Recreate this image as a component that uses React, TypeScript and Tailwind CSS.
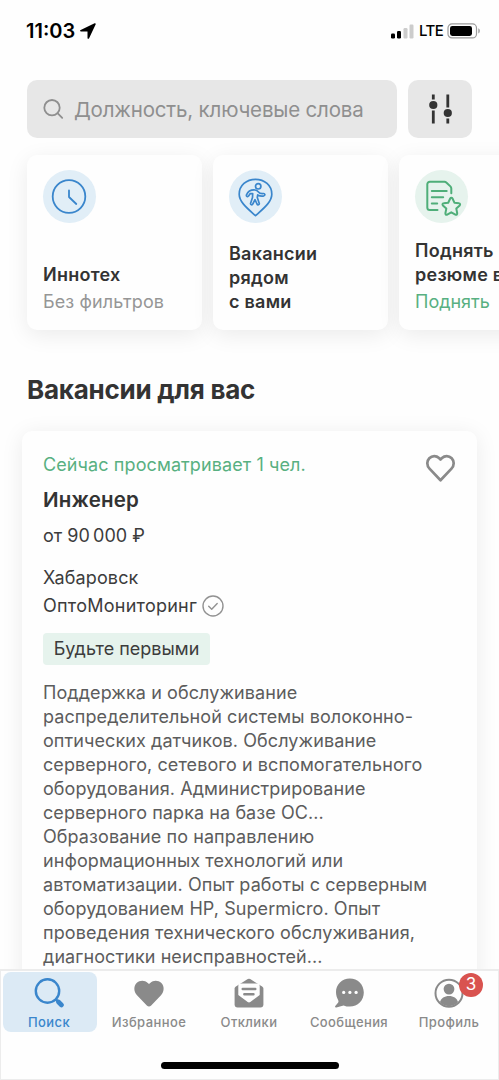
import type { ReactNode } from "react";

const description = [
  "Поддержка и обслуживание",
  "распределительной системы волоконно-",
  "оптических датчиков. Обслуживание",
  "серверного, сетевого и вспомогательного",
  "оборудования. Администрирование",
  "серверного парка на базе ОС...",
  "Образование по направлению",
  "информационных технологий или",
  "автоматизации. Опыт работы с серверным",
  "оборудованием HP, Supermicro. Опыт",
  "проведения технического обслуживания,",
  "диагностики неисправностей...",
];

const StatusBar = () => (
  <header className="flex h-20 shrink-0 items-start justify-between pl-[26px] pr-[18px] pt-[19px] text-black">
    <div className="flex h-6 items-center gap-[5px]">
      <span className="text-[20px] font-semibold leading-6">11:03</span>
      <svg width="16" height="16" viewBox="0 0 16 16" fill="currentColor">
        <path d="M14.6.3.7 6.9c-1 .5-.7 1.5.3 1.5h6.2c.2 0 .3.1.3.3v6.2c0 1 1.2 1.2 1.6.3l6.5-13.7c.4-.9-.2-1.6-1-1.2Z" />
      </svg>
    </div>
    <div className="flex h-6 items-center">
      <svg width="24" height="15" viewBox="0 0 24 15">
        <rect x="0" y="9.5" width="4" height="5" rx="1.2" fill="#000" />
        <rect x="6" y="7" width="4" height="7.5" rx="1.2" fill="#000" />
        <rect x="12.500" y="4" width="4" height="10.500" rx="1.200" fill="#ccc" />
        <rect x="18.500" y="0.500" width="4" height="14" rx="1.200" fill="#ccc" />
      </svg>
      <span className="ml-[4px] w-[24px] text-[15px] font-medium leading-6 tracking-[-0.5px]">LTE</span>
      <svg className="ml-[4px]" width="34" height="16" viewBox="0 0 34 16">
        <rect x="1" y="0.9" width="28.5" height="14" rx="4" fill="none" stroke="#9b9b9b" strokeWidth="1.2" />
        <rect x="3" y="2.9" width="22" height="10" rx="2.3" fill="#000" />
        <path d="M31.3 5.300c2 .8 2 4.400 0 5.200Z" fill="#9b9b9b" />
      </svg>
    </div>
  </header>
);

const SearchBar = () => (
  <div className="flex h-[58px] shrink-0 gap-[11px] pl-[27px] pr-[27px]">
    <div className="flex flex-1 items-center rounded-[10px] bg-[#e7e7e7] pl-[16px] text-[#8f8f8f]">
      <svg width="21" height="21" viewBox="0 0 21 21" fill="none" stroke="currentColor" strokeWidth="1.8" strokeLinecap="round">
        <circle cx="9" cy="8.7" r="7.7" />
        <path d="m14.5 14.2 4.700 4.700" />
      </svg>
      <span className="ml-[10px] mt-[2px] whitespace-nowrap text-[20.5px] tracking-[-0.18px]">Должность, ключевые слова</span>
    </div>
    <div className="flex w-16 items-center justify-center rounded-[10px] bg-[#e7e7e7] text-[#333]">
      <svg width="24" height="30" viewBox="0 0 24 30" fill="currentColor">
        <path d="M3.900.5h2.800v5H3.900zM3.900 16.500h2.800v13H3.900zM18.400.5h2.800v13h-2.800zM18.400 24.500h2.800v5h-2.800z" />
        <circle cx="5.3" cy="11" r="4.1" />
        <circle cx="19.8" cy="19" r="4.1" />
      </svg>
    </div>
  </div>
);

const ClockIcon = () => (
  <svg width="37" height="37" viewBox="0 0 37 37" fill="none" stroke="#3a86cc" strokeWidth="1.8" strokeLinecap="round" strokeLinejoin="round">
    <circle cx="18" cy="18.5" r="16.3" />
    <path d="M18 12.5v6.500l7.300 7" />
  </svg>
);

const PinIcon = () => (
  <svg width="37" height="40" viewBox="0 0 37 40" fill="none" stroke="#3a86cc" strokeWidth="1.7" strokeLinecap="round" strokeLinejoin="round">
    <path d="M18.500 38.700C10.500 31.500 2.200 25 2.200 17.200 2.200 8.500 9.500 2.300 18.500 2.300s16.300 6.200 16.300 14.900c0 7.800-8.300 14.300-16.300 21.500Z" />
    <circle cx="21.2" cy="9.3" r="2.7" />
    <path d="M18 13c-4-.3-6.900 1.200-8.500 4.900-.5 1.400 1.300 2.300 2.100 1l1.500-2.200 2.600-.2-.2 4-1.900 5.800c-.4 1.500 1.600 2.100 2.200.7l2.200-4.300 2 4.300c.7 1.400 2.700.7 2.200-.8l-1.900-5.700.4-2.600c2 1.100 4.100 1.400 6.200.9 1.500-.5 1.100-2.500-.5-2.300-2.600.3-4.200-.5-5.200-1.800-.8-1-1.800-1.600-3.200-1.700Z" />
  </svg>
);

const ResumeIcon = () => (
  <svg width="40" height="40" viewBox="0 0 40 40" fill="none" stroke="#4fae79" strokeWidth="2" strokeLinecap="round" strokeLinejoin="round">
    <path d="M15.500 33H7.800a2.500 2.500 0 0 1-2.500-2.500V7.300a2.500 2.500 0 0 1 2.500-2.500h14.700c.8 0 1.300.2 1.800.7l4.100 3.900c.6.600.9 1.200.9 2v4.800M9.800 14h14.900M9.800 20.300h11.400M9.800 26.600h5.400" />
    <path d="M28.200 21.500c.5-1 1.800-1 2.300 0l1.900 4.200 4.500.5c1.200.1 1.600 1.400.8 2.200l-3.400 3.200.9 4.700c.2 1.100-.8 1.900-1.800 1.300l-4.100-2.300-4.100 2.300c-1 .6-2-.2-1.800-1.300l.9-4.700-3.400-3.200c-.8-.8-.4-2.100.8-2.200l4.500-.5Z" />
  </svg>
);

type ShortcutProps = {
  icon: ReactNode;
  title: string[];
  action?: ReactNode;
  green?: boolean;
};

const Shortcut = ({ icon, title, action, green }: ShortcutProps) => (
  <div className="flex h-[175px] w-[175px] shrink-0 flex-col justify-between rounded-[10px] bg-[#fefefe] pb-[16px] pl-[16px] pt-[15px] shadow-[0_5px_22px_rgba(0,0,0,0.08)]">
    <div className={`flex size-[53px] items-center justify-center rounded-full ${green ? "bg-[#e6f3ed]" : "bg-[#e1eef7]"}`}>
      {icon}
    </div>
    <div className="whitespace-nowrap text-[18px] leading-6">
      {title.map((line) => (
        <div key={line} className="font-semibold tracking-[0.25px] text-[#333]">{line}</div>
      ))}
      {action}
    </div>
  </div>
);

const Shortcuts = () => (
  <div className="mt-[17px] flex shrink-0 gap-[11px] pl-[27px]">
    <Shortcut icon={<ClockIcon />} title={["Иннотех"]} action={<div className="mt-[3px] tracking-[0.1px] text-[#969696]">Без фильтров</div>} />
    <Shortcut icon={<PinIcon />} title={["Вакансии", "рядом", "с вами"]} />
    <Shortcut green icon={<ResumeIcon />} title={["Поднять", "резюме в"]} action={<div className="mt-[3px] text-[#58b081]">Поднять</div>} />
  </div>
);

const VacancyCard = () => (
  <article className="ml-[22px] mt-[25px] h-[560px] w-[455px] shrink-0 whitespace-nowrap rounded-[10px] bg-[#fefefe] pl-[21px] pt-[22px] text-[18px] leading-6 text-[#3c3c3c] shadow-[0_3px_22px_rgba(0,0,0,0.08)]">
    <div className="flex justify-between pr-[21px]">
      <div>
        <p className="tracking-[0.1px] text-[#58b081]">Сейчас просматривает 1 чел.</p>
        <h3 className="mt-[10px] text-[20.5px] font-semibold leading-[26px] tracking-[0.2px] text-[#333]">Инженер</h3>
      </div>
      <svg width="32" height="30" viewBox="0 0 32 30" fill="none" stroke="#8a8a8a" strokeWidth="2.7" strokeLinejoin="round">
        <path d="M16.500 27.200 5.500 15.600C2.600 12.500 2.600 8 5.300 5.200c2.800-2.800 7-2.800 9.700-.2l1.500 1.500L18 5c2.700-2.600 6.900-2.600 9.700.2 2.700 2.800 2.700 7.300-.2 10.400Z" />
      </svg>
    </div>
    <p className="mt-[11px]">от 90{"\u2009"}000 ₽</p>
    <p className="mt-[18px] tracking-[0.15px]">Хабаровск</p>
    <div className="mt-[4px] flex items-center gap-[5px]">
      <span className="tracking-[0.25px]">ОптоМониторинг</span>
      <svg width="22" height="22" viewBox="0 0 22 22" fill="none" stroke="#929292" strokeWidth="1.4" strokeLinecap="round" strokeLinejoin="round">
        <circle cx="11" cy="11" r="10" />
        <path d="m6.700 11.200 3 3 5.500-5.800" />
      </svg>
    </div>
    <span className="mt-[15px] flex h-8 w-[167px] items-center justify-center rounded-[4px] bg-[#e6f3ed]">Будьте первыми</span>
    <div className="mt-[16px] tracking-[0.08px] text-[#5c5c5c]">
      {description.map((line) => (
        <p key={line}>{line}</p>
      ))}
    </div>
  </article>
);

const SearchTabIcon = () => (
  <svg width="32" height="32" viewBox="0 0 32 32" fill="none" stroke="currentColor" strokeLinecap="round">
    <circle cx="14.5" cy="14" r="11.7" strokeWidth="2.4" />
    <path d="m23 22.500 1.500 1.500" strokeWidth="2.5" />
    <path d="m25.500 25 3 2.900" strokeWidth="4.8" />
  </svg>
);

const HeartTabIcon = () => (
  <svg width="32" height="32" viewBox="0 0 32 32" fill="currentColor">
    <path d="M16 29.500c-.7 0-1.500-.4-2.200-1.100L4 18.300c-3.400-3.600-3.500-9-.4-12.200 3.200-3.200 8-3.200 11.200-.2L16 7l1.200-1.100c3.200-3 8-3 11.200.2 3.100 3.200 3 8.600-.4 12.200l-9.800 10.100c-.7.7-1.500 1.100-2.200 1.100Z" />
  </svg>
);

const MailTabIcon = () => (
  <svg width="32" height="32" viewBox="0 0 32 32">
    <path d="M14.800 2.100a2.500 2.500 0 0 1 2.400 0l11.900 7.300c.8.500 1.300 1.300 1.300 2.200v15.900a3 3 0 0 1-3 3H4.600a3 3 0 0 1-3-3V11.600c0-.9.500-1.700 1.300-2.200Z" fill="currentColor" />
    <path d="M7.500 6.500h17a2.200 2.200 0 0 1 2.200 2.200v9.300L17.300 25a2.200 2.200 0 0 1-2.600 0l-9.400-7V8.700a2.200 2.200 0 0 1 2.200-2.200Z" fill="#fefefe" />
    <path d="M9.700 12h12.600M11.300 17.300h9.200" stroke="currentColor" strokeWidth="2.4" strokeLinecap="round" />
  </svg>
);

const ChatTabIcon = () => (
  <svg width="32" height="32" viewBox="0 0 32 32">
    <path d="M16.800 1.500C9 1.500 3 7.500 3 15.100c0 3.600 1.100 6 2.300 8.400.3.700.3 1.400-.1 2.100L2.300 29c-.6.9 0 1.700 1 1.400l7.300-2c2 .8 3.900 1.200 6.200 1.200 8 0 14-6.200 14-14.100s-6-14-14-14Z" fill="currentColor" />
    <g fill="#fefefe">
      <circle cx="10.7" cy="15.4" r="1.6" />
      <circle cx="16.9" cy="15.4" r="1.6" />
      <circle cx="23.1" cy="15.4" r="1.6" />
    </g>
  </svg>
);

const ProfileTabIcon = () => (
  <svg width="32" height="32" viewBox="0 0 32 32">
    <circle cx="16" cy="16.2" r="13.5" fill="none" stroke="currentColor" strokeWidth="2" />
    <circle cx="16" cy="12.1" r="5.4" fill="currentColor" />
    <path d="M7 25.100c1-3.800 4.500-6 9-6s8 2.200 9 6c-2.300 2.600-5.200 4.100-9 4.100s-6.700-1.500-9-4.100Z" fill="currentColor" />
  </svg>
);

const tabs = [
  { label: "Поиск", icon: <SearchTabIcon />, active: true },
  { label: "Избранное", icon: <HeartTabIcon /> },
  { label: "Отклики", icon: <MailTabIcon /> },
  { label: "Сообщения", icon: <ChatTabIcon /> },
  { label: "Профиль", icon: <ProfileTabIcon />, badge: 3 },
];

const TabBar = () => (
  <nav className="z-10 flex h-[111px] shrink-0 flex-col justify-between border border-t-2 border-[#ececec] bg-[#fefefe] pb-[10px] pt-[1px]">
    <div className="flex pl-[2px]">
      {tabs.map((tab) => (
        <div
          key={tab.label}
          className={`relative mr-[6px] flex h-[60px] w-[94px] shrink-0 flex-col items-center rounded-[8px] pr-[2px] pt-[5px] ${
            tab.active ? "bg-[#dceaf5] text-[#3a86cc]" : "text-[#8a8a8a]"
          }`}
        >
          {tab.icon}
          <span className="mt-[5px] whitespace-nowrap text-[13px] font-medium leading-4 tracking-[0.4px]">{tab.label}</span>
          {tab.badge && (
            <span className="absolute right-[14px] top-[1px] flex size-6 items-center justify-center rounded-full bg-[#d9534f] text-[17px] text-white">
              {tab.badge}
            </span>
          )}
        </div>
      ))}
    </div>
    <div className="h-[7px] w-[178px] self-center rounded-full bg-black" />
  </nav>
);

export default function App() {
  return (
    <div className="flex h-[1080px] w-[499px] flex-col overflow-hidden bg-[#fefefe] font-[Inter,sans-serif]">
      <main className="flex min-h-0 flex-1 flex-col overflow-hidden">
        <StatusBar />
        <SearchBar />
        <Shortcuts />
        <h2 className="mt-[44px] shrink-0 pl-[27px] text-[26px] font-bold leading-8 tracking-[-0.26px] text-[#333]">Вакансии для вас</h2>
        <VacancyCard />
      </main>
      <TabBar />
    </div>
  );
}
